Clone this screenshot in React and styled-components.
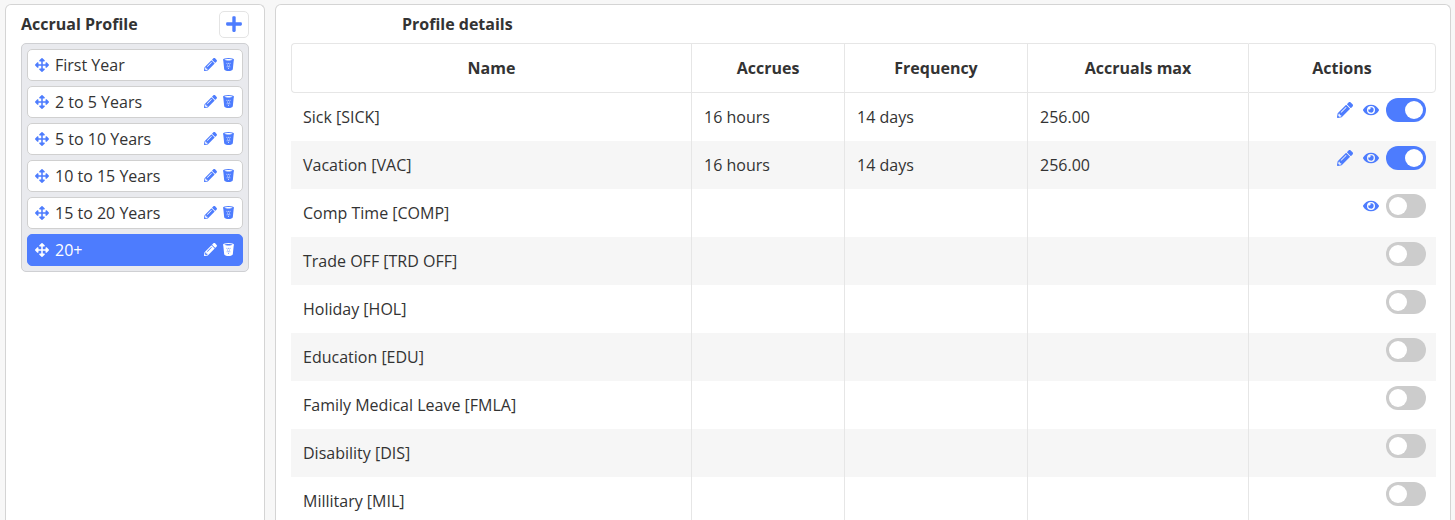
import React from "react";
import styled, { createGlobalStyle } from "styled-components";
import { FaArrowsAlt, FaPencilAlt, FaEye, FaPlus } from "react-icons/fa";

const GlobalStyle = createGlobalStyle`
  html, body {
    margin: 0;
    height: 520px;
    overflow: hidden;
    background: #f7f7f7;
    font-family: "Open Sans", sans-serif;
    color: #333;
  }
`;

const Page = styled.div`
  display: flex;
  align-items: flex-start;
  gap: 10px;
  padding: 4px 4px 0 5px;
  height: 516px;
`;

const Card = styled.section`
  background: #fff;
  border: 1px solid #d4d4d4;
  border-bottom: 0;
  border-radius: 6px 6px 0 0;
  box-sizing: border-box;
  height: 530px;
`;

const ProfileCard = styled(Card)`
  width: 260px;
  flex: none;
  padding: 5px 15px 0;
`;

const DetailsCard = styled(Card)`
  flex: 1;
  min-width: 0;
  padding: 0 15px;
`;

const ProfileHead = styled.header`
  display: flex;
  justify-content: space-between;
  align-items: center;
  height: 28px;
  margin-bottom: 5px;
`;

const Title = styled.h2`
  margin: 0;
  font-size: 16px;
  line-height: 26px;
  font-weight: 700;
  color: #333;
`;

const AddButton = styled.button`
  width: 30px;
  height: 27px;
  padding: 0;
  display: flex;
  align-items: center;
  justify-content: center;
  background: #fff;
  border: 1px solid #e4e4e4;
  border-radius: 5px;
  color: #4d7cfe;
  font-size: 18px;
`;

const ProfileList = styled.ul`
  list-style: none;
  margin: 0;
  padding: 5px;
  display: flex;
  flex-direction: column;
  gap: 5px;
  background: #e9eaee;
  border: 1px solid #cfd0d3;
  border-radius: 5px;
`;

const ProfileItem = styled.li`
  display: flex;
  align-items: center;
  height: 32px;
  box-sizing: border-box;
  padding: 0 7px;
  border: 1px solid ${(p) => (p.$active ? "#4d7cfe" : "#d0d0d0")};
  border-radius: 5px;
  background: ${(p) => (p.$active ? "#4d7cfe" : "#fff")};
  color: ${(p) => (p.$active ? "#fff" : "#333")};
  font-size: 16px;
  line-height: 28px;
  --icon: ${(p) => (p.$active ? "#fff" : "#4d7cfe")};
  --dots: ${(p) => (p.$active ? "#4d7cfe" : "#fff")};
`;

const DragIcon = styled(FaArrowsAlt)`
  color: var(--icon);
  font-size: 14px;
  margin-right: 6px;
  margin-top: -1px;
  flex: none;
`;

const ItemLabel = styled.span`
  flex: 1;
  white-space: nowrap;
`;

const ItemPencil = styled(FaPencilAlt)`
  color: var(--icon);
  font-size: 13px;
  margin-right: 6px;
  margin-top: -1px;
`;

const BinSvg = styled.svg`
  width: 11px;
  height: 13px;
  color: var(--icon);
  margin-top: -1px;
  margin-right: 1px;
`;

const DetailsTitle = styled.h2`
  margin: 0;
  padding-left: 111px;
  height: 38px;
  line-height: 38px;
  font-size: 16px;
  font-weight: 700;
  color: #333;
`;

const Table = styled.table`
  width: 1145px;
  table-layout: fixed;
  border-collapse: separate;
  border-spacing: 0;
  font-size: 16px;
`;

const HeadCell = styled.th`
  height: 50px;
  box-sizing: border-box;
  padding: 0;
  font-size: 16px;
  font-weight: 700;
  color: #333;
  text-align: center;
  background: #fff;
  border-top: 1px solid #e6e6e6;
  border-bottom: 1px solid #e6e6e6;
  border-left: 1px solid #e6e6e6;
  &:first-child {
    border-radius: 4px 0 0 4px;
  }
  &:last-child {
    border-right: 1px solid #e6e6e6;
    border-radius: 0 4px 4px 0;
  }
`;

const Row = styled.tr`
  background: ${(p) => (p.$odd ? "#f6f6f6" : "#fff")};
`;

const Cell = styled.td`
  height: 48px;
  padding: 0 12px;
  box-sizing: border-box;
  color: #333;
  white-space: nowrap;
  border-left: 1px solid #e6e6e6;
  &:first-child {
    border-left: 0;
  }
`;

const ActionCell = styled(Cell)`
  padding: 0 10px 0 0;
  vertical-align: top;
`;

const Actions = styled.div`
  display: flex;
  justify-content: flex-end;
  align-items: center;
  height: 24px;
  margin-top: 5px;
  color: #4d7cfe;
`;

const RowPencil = styled(FaPencilAlt)`
  font-size: 16px;
  margin-right: 10px;
`;

const RowEye = styled(FaEye)`
  font-size: 16px;
  margin-right: 7px;
`;

const Toggle = styled.span`
  position: relative;
  display: block;
  width: 40px;
  height: 24px;
  border-radius: 12px;
  background: ${(p) => (p.$on ? "#4d7cfe" : "#ccc")};
  &::after {
    content: "";
    position: absolute;
    top: 3px;
    left: ${(p) => (p.$on ? "19px" : "3px")};
    width: 18px;
    height: 18px;
    border-radius: 50%;
    background: #fff;
  }
`;

const Bin = () => (
  <BinSvg viewBox="0 0 12 13" preserveAspectRatio="none">
    <path
      fill="currentColor"
      fillRule="evenodd"
      d="M0 1.800C0 .7 2.700 0 6 0s6 .7 6 1.800c0 .3-.1.6-.3.8l-1 8.600C10.500 12.300 8.300 13 6 13s-4.500-.7-4.700-1.800l-1-8.600C.1 2.400 0 2.100 0 1.800zM6 1C3.900 1 2 1.300 1.500 1.800 2.200 2.300 4 2.600 6 2.600s3.800-.3 4.500-.8C10 1.300 8.100 1 6 1z"
    />
    <g style={{ fill: "var(--dots)" }}>
      <circle cx="4.300" cy="5.200" r=".5" />
      <circle cx="6" cy="5.200" r=".5" />
      <circle cx="7.700" cy="5.200" r=".5" />
      <circle cx="5.100" cy="7" r=".5" />
      <circle cx="6.900" cy="7" r=".5" />
      <circle cx="4.500" cy="8.800" r=".5" />
      <circle cx="6" cy="8.800" r=".5" />
      <circle cx="7.500" cy="8.800" r=".5" />
      <circle cx="6" cy="10.500" r=".5" />
    </g>
  </BinSvg>
);

const profiles = ["First Year", "2 to 5 Years", "5 to 10 Years", "10 to 15 Years", "15 to 20 Years", "20+"];

const accruals = [
  { name: "Sick [SICK]", accrues: "16 hours", frequency: "14 days", max: "256.00", edit: true, view: true, on: true },
  { name: "Vacation [VAC]", accrues: "16 hours", frequency: "14 days", max: "256.00", edit: true, view: true, on: true },
  { name: "Comp Time [COMP]", view: true },
  { name: "Trade OFF [TRD OFF]" },
  { name: "Holiday [HOL]" },
  { name: "Education [EDU]" },
  { name: "Family Medical Leave [FMLA]" },
  { name: "Disability [DIS]" },
  { name: "Millitary [MIL]" },
];

export default function App() {
  return (
    <>
      <GlobalStyle />
      <Page>
        <ProfileCard>
          <ProfileHead>
            <Title>Accrual Profile</Title>
            <AddButton>
              <FaPlus />
            </AddButton>
          </ProfileHead>
          <ProfileList>
            {profiles.map((name) => (
              <ProfileItem key={name} $active={name === "20+"}>
                <DragIcon />
                <ItemLabel>{name}</ItemLabel>
                <ItemPencil />
                <Bin />
              </ProfileItem>
            ))}
          </ProfileList>
        </ProfileCard>
        <DetailsCard>
          <DetailsTitle>Profile details</DetailsTitle>
          <Table>
            <colgroup>
              <col width="400" />
              <col width="153" />
              <col width="183" />
              <col width="221" />
              <col width="188" />
            </colgroup>
            <thead>
              <tr>
                <HeadCell>Name</HeadCell>
                <HeadCell>Accrues</HeadCell>
                <HeadCell>Frequency</HeadCell>
                <HeadCell>Accruals max</HeadCell>
                <HeadCell>Actions</HeadCell>
              </tr>
            </thead>
            <tbody>
              {accruals.map((a, i) => (
                <Row key={a.name} $odd={i % 2 === 1}>
                  <Cell>{a.name}</Cell>
                  <Cell>{a.accrues}</Cell>
                  <Cell>{a.frequency}</Cell>
                  <Cell>{a.max}</Cell>
                  <ActionCell>
                    <Actions>
                      {a.edit && <RowPencil />}
                      {a.view && <RowEye />}
                      <Toggle $on={a.on} />
                    </Actions>
                  </ActionCell>
                </Row>
              ))}
            </tbody>
          </Table>
        </DetailsCard>
      </Page>
    </>
  );
}
